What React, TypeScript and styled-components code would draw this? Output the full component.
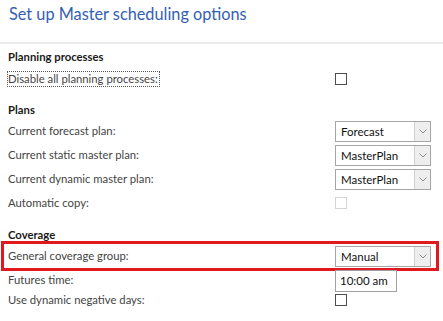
import React from "react";
import styled, { createGlobalStyle } from "styled-components";

const GlobalStyle = createGlobalStyle`
  body {
    margin: 0;
    background: #ffffff;
    font-family: Lato, "Open Sans", sans-serif;
    color: #333333;
  }
`;

const Page = styled.div`
  width: 443px;
  height: 321px;
  overflow: hidden;
  background: #ffffff;
`;

const Header = styled.div`
  height: 44px;
  padding-left: 9px;
  border-bottom: 2px solid #ebebeb;
  box-sizing: border-box;
`;

const Title = styled.h1`
  margin: 0;
  padding-top: 3px;
  font-size: 16.3px;
  line-height: 22px;
  font-weight: 400;
  color: #3560b2;
`;

const Body = styled.div`
  padding: 4px 12px 0 8px;
`;

const SectionTitle = styled.div<{ $gap?: number }>`
  margin-top: ${(p) => p.$gap ?? 0}px;
  height: 18px;
  line-height: 18px;
  font-size: 11.3px;
  font-weight: 700;
  color: #1a1a1a;
`;

const Row = styled.div<{ $height?: number; $highlight?: boolean }>`
  position: relative;
  display: grid;
  grid-template-columns: 1fr 96px;
  align-items: center;
  height: ${(p) => p.$height ?? 24}px;

  ${(p) =>
    p.$highlight &&
    `
    &::after {
      content: "";
      position: absolute;
      left: -7px;
      right: -8px;
      top: -3px;
      bottom: -3px;
      border: 3px solid #e0191e;
      pointer-events: none;
    }
  `}
`;

const Label = styled.span<{ $focused?: boolean }>`
  justify-self: start;
  font-size: 11.3px;
  line-height: 14px;
  color: #444444;
  padding: 0 1px 0 0;
  border: 1px dotted ${(p) => (p.$focused ? "#555555" : "transparent")};
  margin-left: -1px;
`;

const Combo = styled.div`
  display: flex;
  height: 21px;
  border: 1px solid #a6a6a6;
  box-sizing: border-box;
  background: #ffffff;
`;

const ComboValue = styled.div`
  flex: 1;
  padding-left: 5px;
  font-size: 11.5px;
  line-height: 19px;
  color: #111111;
`;

const ComboButton = styled.div`
  width: 15px;
  border-left: 1px solid #d0d0d0;
  background: #eeeeee;
  display: flex;
  align-items: center;
  justify-content: center;
`;

const Check = styled.div<{ $disabled?: boolean }>`
  width: 12px;
  height: 12px;
  box-sizing: border-box;
  border: 1px solid ${(p) => (p.$disabled ? "#d4d4d4" : "#4d4d4d")};
  background: #ffffff;
`;

const TimeBox = styled.div`
  align-self: start;
  width: 62px;
  height: 22px;
  box-sizing: border-box;
  border: 1px solid #a0a0a0;
  padding-left: 4px;
  font-size: 11.5px;
  line-height: 20px;
  color: #111111;
  margin-top: 2px;
`;

function Chevron() {
  return (
    <svg width="8" height="5" viewBox="0 0 8 5">
      <path d="M0.5 0.5 L4 4 L7.5 0.5" fill="none" stroke="#8a8a8a" strokeWidth="1" />
    </svg>
  );
}

function ComboBox({ value }: { value: string }) {
  return (
    <Combo>
      <ComboValue>{value}</ComboValue>
      <ComboButton>
        <Chevron />
      </ComboButton>
    </Combo>
  );
}

export default function App() {
  return (
    <Page>
      <GlobalStyle />
      <Header>
        <Title>Set up Master scheduling options</Title>
      </Header>
      <Body>
        <SectionTitle>Planning processes</SectionTitle>
        <Row $height={25}>
          <Label $focused>Disable all planning processes:</Label>
          <Check />
        </Row>

        <SectionTitle $gap={10}>Plans</SectionTitle>
        <Row>
          <Label>Current forecast plan:</Label>
          <ComboBox value="Forecast" />
        </Row>
        <Row>
          <Label>Current static master plan:</Label>
          <ComboBox value="MasterPlan" />
        </Row>
        <Row>
          <Label>Current dynamic master plan:</Label>
          <ComboBox value="MasterPlan" />
        </Row>
        <Row>
          <Label>Automatic copy:</Label>
          <Check $disabled />
        </Row>

        <SectionTitle $gap={11}>Coverage</SectionTitle>
        <Row $highlight>
          <Label>General coverage group:</Label>
          <ComboBox value="Manual" />
        </Row>
        <Row $height={21}>
          <Label>Futures time:</Label>
          <TimeBox>10:00 am</TimeBox>
        </Row>
        <Row $height={22}>
          <Label>Use dynamic negative days:</Label>
          <Check />
        </Row>
      </Body>
    </Page>
  );
}
